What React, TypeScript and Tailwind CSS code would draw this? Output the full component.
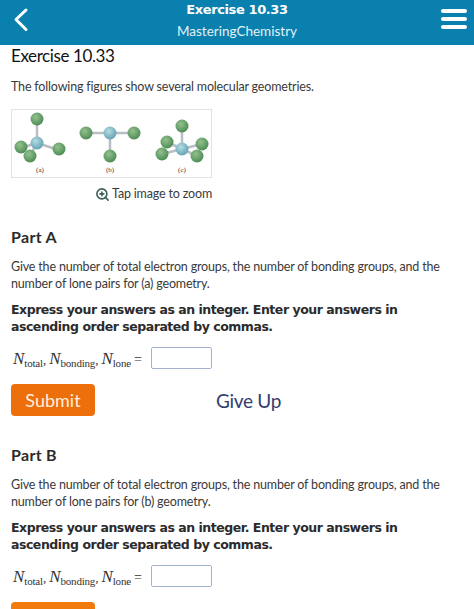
import { ZoomIn } from "lucide-react";

const sans = "font-['Lato','Open_Sans',sans-serif]";

function Atom({ x, y, r = 6.5, center }: { x: number; y: number; r?: number; center?: boolean }) {
  return <circle cx={x} cy={y} r={r} fill={center ? "url(#blue)" : "url(#green)"} />;
}

function Bond({ a, b }: { a: [number, number]; b: [number, number] }) {
  return <line x1={a[0]} y1={a[1]} x2={b[0]} y2={b[1]} stroke="#b9bec6" strokeWidth={2.5} />;
}

function Molecules() {
  return (
    <svg width="199" height="67" viewBox="1 0 199 67" className="block">
      <defs>
        <radialGradient id="green" cx="40%" cy="35%" r="70%">
          <stop offset="0%" stopColor="#95c08f" />
          <stop offset="100%" stopColor="#478a50" />
        </radialGradient>
        <radialGradient id="blue" cx="40%" cy="35%" r="70%">
          <stop offset="0%" stopColor="#b5dde2" />
          <stop offset="100%" stopColor="#5f9fb0" />
        </radialGradient>
      </defs>
      {/* (a) */}
      <Bond a={[26, 33]} b={[26, 10]} />
      <Bond a={[26, 33]} b={[10, 38]} />
      <Bond a={[26, 33]} b={[19, 46]} />
      <Bond a={[26, 33]} b={[48, 40]} />
      <Atom x={26} y={9} />
      <Atom x={10} y={37} />
      <Atom x={48} y={39} />
      <Atom x={26} y={33} center />
      <Atom x={19} y={46} />
      {/* (b) */}
      <Bond a={[75, 23]} b={[123, 23]} />
      <Bond a={[99, 23]} b={[99, 46]} />
      <Atom x={75} y={23} />
      <Atom x={123} y={23} />
      <Atom x={99} y={23} center />
      <Atom x={99} y={46} />
      {/* (c) */}
      <Bond a={[171, 39]} b={[171, 16]} />
      <Bond a={[171, 39]} b={[156, 32]} />
      <Bond a={[171, 39]} b={[191, 34]} />
      <Bond a={[171, 39]} b={[151, 44]} />
      <Bond a={[171, 39]} b={[186, 46]} />
      <Atom x={171} y={16} />
      <Atom x={156} y={32} />
      <Atom x={191} y={34} />
      <Atom x={171} y={39} center />
      <Atom x={151} y={44} />
      <Atom x={186} y={46} />
      <text x="29" y="62" fontSize="7" textAnchor="middle" fontFamily="Liberation Serif, serif" fill="#333">(a)</text>
      <text x="99" y="62" fontSize="7" textAnchor="middle" fontFamily="Liberation Serif, serif" fill="#333">(b)</text>
      <text x="171" y="62" fontSize="7" textAnchor="middle" fontFamily="Liberation Serif, serif" fill="#333">(c)</text>
    </svg>
  );
}

function Formula() {
  const n = "italic text-[17px]";
  const sub = "text-[11px] tracking-[-0.2px] relative top-[3px]";
  return (
    <div className="mt-[11px] flex h-[24px] items-center pl-[13px] text-[#333]">
      <span className="whitespace-nowrap font-['Liberation_Serif',serif] text-[13px] leading-none">
        <span className={n}>N</span><span className={sub}>total</span>,<span className="inline-block w-[3px]" />
        <span className={n}>N</span><span className={sub}>bonding</span>,<span className="inline-block w-[3px]" />
        <span className={n}>N</span><span className={sub}>lone</span>
        <span className="ml-[3px] text-[14px]">=</span>
      </span>
      <div className="ml-auto mr-[262px] h-[22px] w-[61px] rounded-[2px] border border-[#a3b3cf] bg-white" />
    </div>
  );
}

function Part({ label, geometry }: { label: string; geometry: string }) {
  return (
    <section>
      <h2 className="pl-[11px] text-[16px] font-bold leading-[20px] tracking-[0.3px] text-[#2b2b2b]">{label}</h2>
      <p className="mt-[11px] px-[11px] text-[12.5px] leading-[17px] tracking-[-0.17px] text-[#3a3a3a]">
        {`Give the number of total electron groups, the number of bonding groups, and the number of lone pairs for (${geometry}) geometry.`}
      </p>
      <p className="mt-[9px] px-[11px] font-['DejaVu_Sans',sans-serif] text-[12.5px] font-bold leading-[17px] tracking-[-0.47px] text-[#2b2b2b]">
        Express your answers as an integer. Enter your answers in ascending order separated by commas.
      </p>
      <Formula />
    </section>
  );
}

export default function App() {
  return (
    <div className={`${sans} h-[609px] w-[474px] overflow-hidden bg-white`}>
      <header className="relative flex h-[45px] flex-col items-center bg-[#0a80ae] text-white">
        <svg width="20" height="30" viewBox="0 0 20 30" className="absolute left-[11px] top-[5px]" fill="none" stroke="white" strokeWidth="3" strokeLinecap="round" strokeLinejoin="round">
          <polyline points="15,5 5,14.5 15,24.5" />
        </svg>
        <div className="pt-[1px] font-['DejaVu_Sans',sans-serif] text-[13px] font-bold leading-[17px] tracking-[-0.4px]">Exercise 10.33</div>
        <div className="mt-[4px] text-[13.5px] leading-[18px] text-[#e3f1f6]">MasteringChemistry</div>
        <div className="absolute right-[7px] top-[9px] flex w-[26px] flex-col gap-[4px]">
          <span className="h-[4px] rounded-full bg-white" />
          <span className="h-[4px] rounded-full bg-white" />
          <span className="h-[4px] rounded-full bg-white" />
        </div>
      </header>

      <h1 className="pl-[11px] pt-[1px] text-[17px] leading-[20px] tracking-[-0.4px] text-[#111]">Exercise 10.33</h1>
      <p className="mt-[12px] pl-[11px] text-[12.5px] leading-[17px] tracking-[-0.17px] text-[#3a3a3a]">
        The following figures show several molecular geometries.
      </p>

      <div className="ml-[11px] mt-[14px] h-[69px] w-[201px] border border-[#e2e2e2]">
        <Molecules />
      </div>
      <div className="ml-[11px] mt-[7px] flex w-[201px] items-center justify-end gap-[2px] text-[12.5px] leading-[18px] tracking-[-0.17px] text-[#3a3a3a]">
        <ZoomIn className="h-[15px] w-[15px] text-[#3f5f5a]" strokeWidth={2.6} />
        Tap image to zoom
      </div>

      <div className="mt-[24px]">
        <Part label="Part A" geometry="a" />
      </div>
      <div className="mt-[14px] flex items-center pl-[11px]">
        <button className="h-[32px] w-[84px] rounded-[4px] bg-[#ec6f0c] text-[18px] leading-none text-[#fdeedd]">Submit</button>
        <span className="ml-[121px] text-[19px] leading-none tracking-[-0.3px] text-[#333d6e]">Give Up</span>
      </div>
      <div className="mt-[29px]">
        <Part label="Part B" geometry="b" />
      </div>
      <div className="mt-[14px] pl-[11px]">
        <button className="h-[32px] w-[84px] rounded-[4px] bg-[#f07a0c]" aria-label="Submit" />
      </div>
    </div>
  );
}
